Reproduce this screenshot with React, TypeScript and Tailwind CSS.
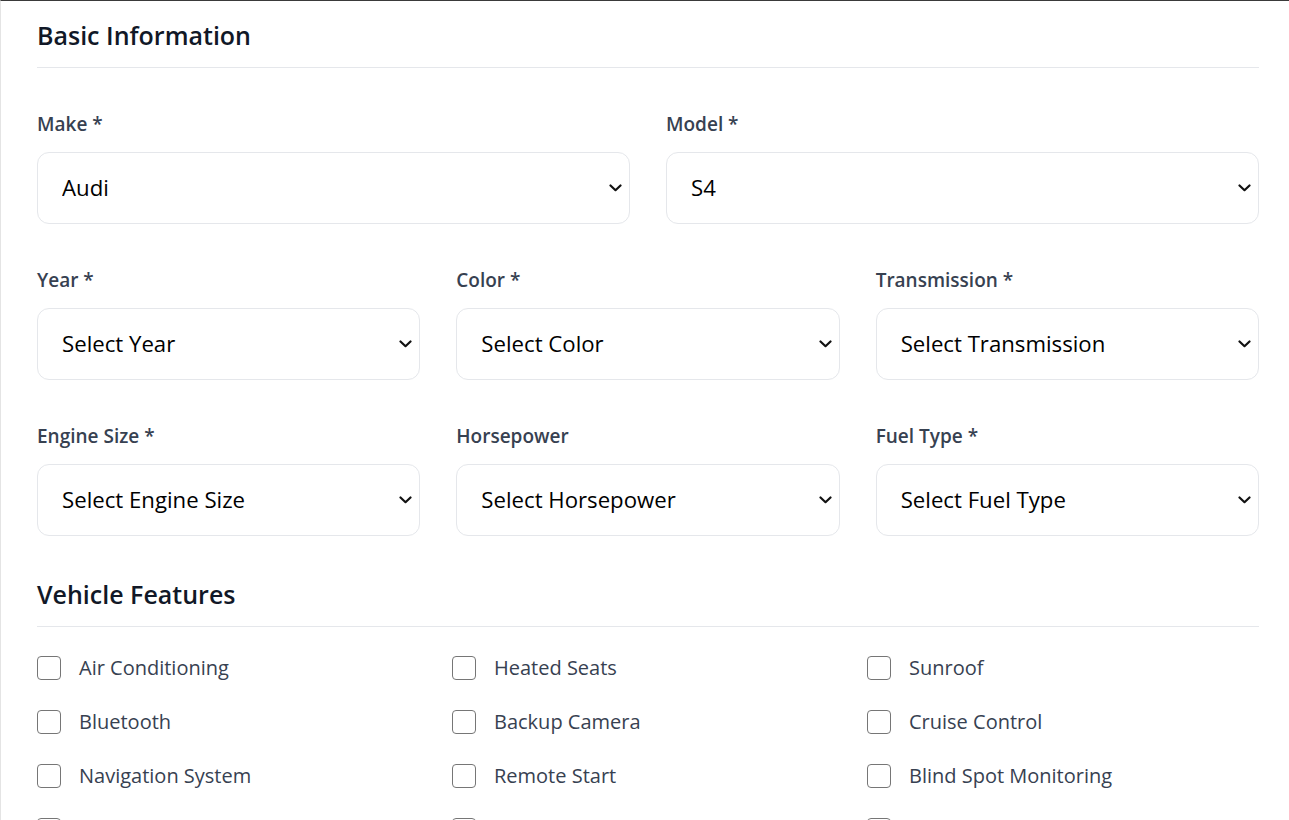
import { useState } from 'react';

const font = { fontFamily: '"Open Sans", "Noto Sans", sans-serif' };

type SelectFieldProps = {
  label: string;
  value: string;
  options: string[];
};

function SelectField({ label, value, options }: SelectFieldProps) {
  const [current, setCurrent] = useState(value);
  return (
    <div className="flex flex-col">
      <label className="text-[19px] leading-[28px] font-semibold text-[#374151] mb-[14px]">
        {label}
      </label>
      <div className="relative">
        <select
          value={current}
          onChange={(e) => setCurrent(e.target.value)}
          className="w-full h-[72px] appearance-none rounded-[12px] border border-[#e5e7eb] bg-white pl-[24px] pr-[40px] text-[22.2px] text-black focus:outline-none"
          style={font}
        >
          {options.map((o) => (
            <option key={o} value={o}>
              {o}
            </option>
          ))}
        </select>
        <svg
          className="pointer-events-none absolute right-[8px] top-1/2 -translate-y-1/2"
          width="13"
          height="8"
          viewBox="0 0 13 8"
          fill="none"
        >
          <polyline points="1.5,1.5 6.5,6.2 11.5,1.5" stroke="#111" strokeWidth="2.2" strokeLinecap="round" strokeLinejoin="round" />
        </svg>
      </div>
    </div>
  );
}

const features = [
  'Air Conditioning',
  'Heated Seats',
  'Sunroof',
  'Bluetooth',
  'Backup Camera',
  'Cruise Control',
  'Navigation System',
  'Remote Start',
  'Blind Spot Monitoring',
  'Leather Seats',
  'Keyless Entry',
  'Lane Departure Warning',
];

export default function App() {
  const [checked, setChecked] = useState<string[]>([]);

  const toggle = (f: string) =>
    setChecked((prev) => (prev.includes(f) ? prev.filter((x) => x !== f) : [...prev, f]));

  return (
    <div
      className="min-h-screen bg-white border-t border-t-[#3a3a3a] border-l border-l-[#e4e4e4] pl-[36px] pr-[30px]"
      style={font}
    >
      <h2 className="mt-[16px] pb-[14px] border-b border-[#e5e7eb] text-[25px] leading-[36px] font-semibold text-[#111827]">
        Basic Information
      </h2>

      <div className="mt-[42px] grid grid-cols-2 gap-x-[36px]">
        <SelectField label="Make *" value="Audi" options={['Audi', 'BMW', 'Mercedes-Benz', 'Toyota']} />
        <SelectField label="Model *" value="S4" options={['A3', 'A4', 'S4', 'Q5']} />
      </div>

      <div className="mt-[42px] grid grid-cols-3 gap-x-[36px] gap-y-[42px]">
        <SelectField label="Year *" value="Select Year" options={['Select Year', '2024', '2023', '2022']} />
        <SelectField label="Color *" value="Select Color" options={['Select Color', 'Black', 'White', 'Silver']} />
        <SelectField
          label="Transmission *"
          value="Select Transmission"
          options={['Select Transmission', 'Automatic', 'Manual']}
        />
        <SelectField
          label="Engine Size *"
          value="Select Engine Size"
          options={['Select Engine Size', '2.0L', '3.0L']}
        />
        <SelectField
          label="Horsepower"
          value="Select Horsepower"
          options={['Select Horsepower', '250 hp', '350 hp']}
        />
        <SelectField
          label="Fuel Type *"
          value="Select Fuel Type"
          options={['Select Fuel Type', 'Gasoline', 'Diesel', 'Electric']}
        />
      </div>

      <h2 className="mt-[40px] pb-[14px] border-b border-[#e5e7eb] text-[25px] leading-[36px] font-semibold text-[#111827]">
        Vehicle Features
      </h2>

      <div className="mt-[26px] grid grid-cols-3 gap-x-[23px] gap-y-[24px] pb-10">
        {features.map((f) => (
          <label key={f} className="flex items-center h-[30px] gap-[18px] cursor-pointer">
            <input
              type="checkbox"
              checked={checked.includes(f)}
              onChange={() => toggle(f)}
              className="appearance-none w-[24px] h-[24px] rounded-[4px] border-[1.5px] border-[#767676] bg-white shrink-0"
            />
            <span className="text-[20px] text-[#374151]">{f}</span>
          </label>
        ))}
      </div>
    </div>
  );
}
